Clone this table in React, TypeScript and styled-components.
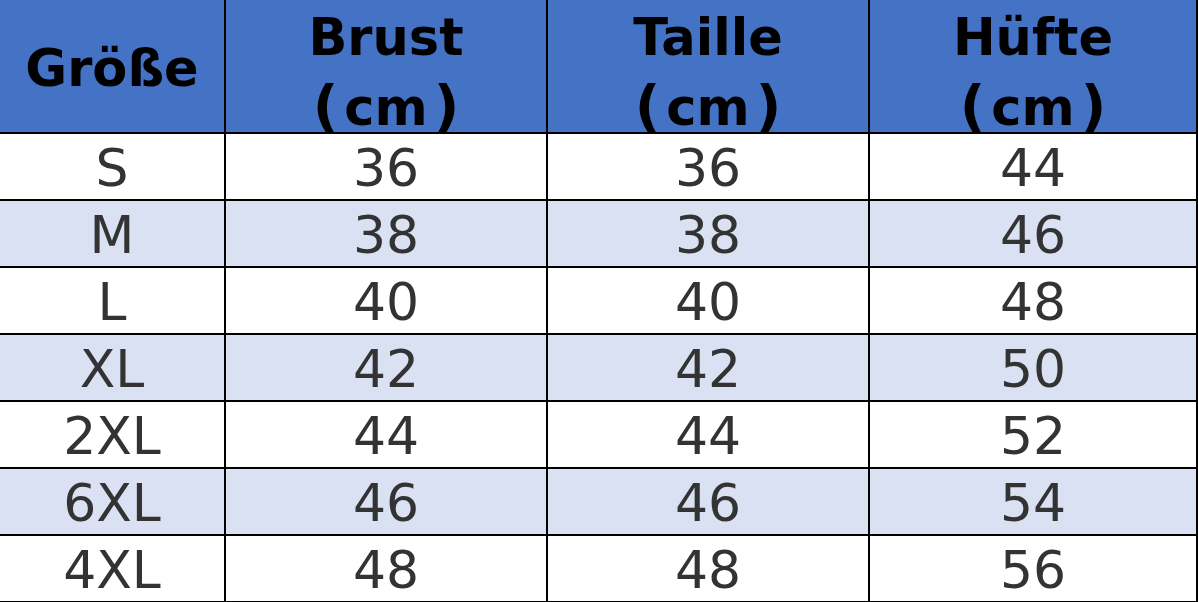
import styled, { createGlobalStyle } from 'styled-components';

const GlobalStyle = createGlobalStyle`
  html, body {
    margin: 0;
    padding: 0;
    background: #ffffff;
    overflow: hidden;
  }
`;

const Table = styled.div`
  display: grid;
  grid-template-columns: 224px 320px 320px 326px;
  grid-template-rows: 132px repeat(7, 65px);
  gap: 2px;
  width: 1196px;
  height: 602px;
  background: #000;
  border-right: 2px solid #000;
  font-family: "DejaVu Sans", Verdana, sans-serif;
`;

const HeadCell = styled.div<{ $single: boolean }>`
  display: flex;
  flex-direction: column;
  align-items: center;
  justify-content: center;
  text-align: center;
  background: #4472c4;
  color: #000;
  font-weight: bold;
  font-size: 51px;
  line-height: 68px;
  padding-top: ${p => (p.$single ? '6px' : '14px')};
`;

const Paren = styled.span<{ $side: 'left' | 'right' }>`
  font-size: 56px;
  ${p => (p.$side === 'left' ? 'margin-right: 6px;' : 'margin-left: 6px;')}
`;

const Cell = styled.div<{ $alt: boolean }>`
  display: flex;
  align-items: center;
  justify-content: center;
  background: ${p => (p.$alt ? '#d9e1f2' : '#ffffff')};
  color: #333;
  font-size: 52px;
  line-height: 1;
  padding-top: 3px;
`;

const headers = ['Größe', 'Brust', 'Taille', 'Hüfte'];

const rows = [
  ['S', '36', '36', '44'],
  ['M', '38', '38', '46'],
  ['L', '40', '40', '48'],
  ['XL', '42', '42', '50'],
  ['2XL', '44', '44', '52'],
  ['6XL', '46', '46', '54'],
  ['4XL', '48', '48', '56'],
];

export default function App() {
  return (
    <>
      <GlobalStyle />
      <Table>
        {headers.map((h, i) => (
          <HeadCell key={h} $single={i === 0}>
            <span>{h}</span>
            {i > 0 && (
              <span>
                <Paren $side="left">(</Paren>cm<Paren $side="right">)</Paren>
              </span>
            )}
          </HeadCell>
        ))}
        {rows.map((row, i) =>
          row.map((v, j) => (
            <Cell key={`${i}-${j}`} $alt={i % 2 === 1}>
              {v}
            </Cell>
          ))
        )}
      </Table>
    </>
  );
}
